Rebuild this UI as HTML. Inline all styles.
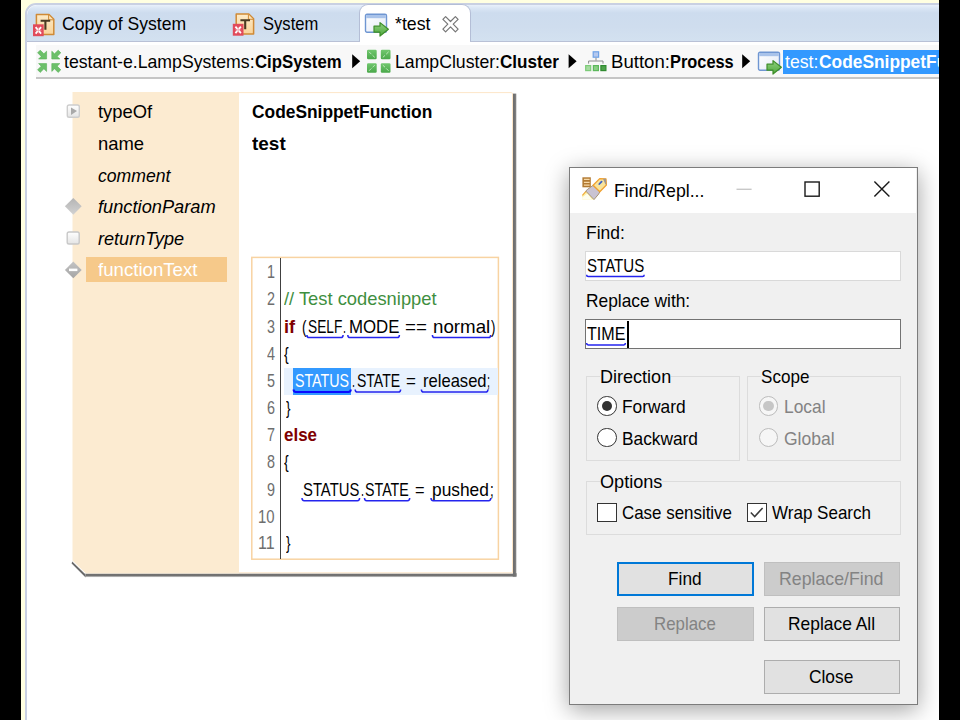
<!DOCTYPE html>
<html>
<head>
<meta charset="utf-8">
<title>Find/Replace</title>
<style>
html,body{margin:0;padding:0;}
body{width:960px;height:720px;overflow:hidden;background:#000;position:relative;font-family:"Liberation Sans",sans-serif;}
.a{position:absolute;}
.t{position:absolute;white-space:pre;line-height:1;transform-origin:0 50%;font-family:"Liberation Sans",sans-serif;}
#win{left:21px;top:0;width:918px;height:720px;background:#ffffe1;overflow:hidden;}
/* coordinates inside #win are page coords via inner wrapper shifted -21px */
#pg{left:-21px;top:0;width:960px;height:720px;}
#frame{left:24.5px;top:3.2px;width:940px;height:730px;background:#fff;border:2.6px solid #c9d0e2;border-radius:11px 0 0 0;box-sizing:border-box;}
#tabbar{left:27px;top:5.4px;width:920px;height:35.8px;background:linear-gradient(#e8f0fb 0,#d9e5f4 10%,#cddcee 22%,#cfddee 60%,#d3e1f0 100%);border-radius:10px 0 0 0;}
#tabline{left:27px;top:40.7px;width:920px;height:1.4px;background:#b9c1d6;}
#atab{left:359px;top:3.8px;width:112px;height:37.2px;background:#fff;border:1px solid #b4bed6;border-bottom:none;border-radius:9px 9px 0 0;box-sizing:border-box;}
#crumb{left:36px;top:45px;width:910px;height:32.5px;background:#f8f8f8;}
#crumbline{left:36px;top:77.2px;width:910px;height:1.7px;background:#c6c6c6;}
#crumbsel{left:783px;top:50px;width:160px;height:24px;background:#3399ff;}
/* property sheet */
#sheet{left:72px;top:92px;width:441px;height:482px;background:#fff;}
#beige{left:72px;top:92px;width:167px;height:482px;background:#fcebd1;}
#seltxt{left:86px;top:257px;width:141px;height:25px;background:#f6c98a;}
#editor{left:251px;top:256.8px;width:248px;height:303px;border:1.4px solid #f7d2a2;box-sizing:border-box;background:#fff;}
#gutter{left:280px;top:258px;width:1px;height:301px;background:#404040;}
#curline{left:284px;top:367.6px;width:213.5px;height:27px;background:#e8f2fe;}
#selword{left:293.2px;top:367.6px;width:57.7px;height:27px;background:#3399ff;}
/* dialog */
#dlg{left:568.8px;top:166.7px;width:349.2px;height:538px;background:#f0f0f0;border:1.6px solid #7c7c7c;box-sizing:border-box;box-shadow:0 5px 22px 0 rgba(0,0,0,.37);}
#dtitle{left:570.4px;top:168.3px;width:346px;height:45px;background:#fff;}
.inp{background:#fff;box-sizing:border-box;}
.grp{border:1px solid #dcdcdc;box-sizing:border-box;}
.btn{box-sizing:border-box;background:#e1e1e1;border:1px solid #adadad;}
.btn.dis{background:#cccccc;border-color:#bfbfbf;}
.btn.def{border:2px solid #0078d7;}
.radio{width:19.4px;height:19.4px;border-radius:50%;box-sizing:border-box;border:1.4px solid #333;background:#fff;}
.radio.dis{border-color:#bcbcbc;background:#f6f6f6;}
.cb{width:19.6px;height:19.6px;box-sizing:border-box;border:1.4px solid #333;background:#fff;}
</style>
</head>
<body>
<div id="win" class="a"><div id="pg" class="a">

<div id="frame" class="a"></div>
<div id="tabbar" class="a"></div>
<div id="tabline" class="a"></div>
<div id="atab" class="a"></div>
<div class="a" style="left:360px;top:40px;width:110px;height:3px;background:#fff"></div>
<div id="crumb" class="a"></div>
<div id="crumbline" class="a"></div>
<div id="crumbsel" class="a"></div>

<!-- property sheet -->
<svg class="a" style="left:60px;top:85px" width="470" height="505" viewBox="60 85 470 505">
  <defs>
    <linearGradient id="shb" x1="0" y1="0" x2="0" y2="1"><stop offset="0" stop-color="#6e6e6e"/><stop offset="0.62" stop-color="#747474"/><stop offset="1" stop-color="#9a9a9a" stop-opacity="0"/></linearGradient>
    <linearGradient id="shr" x1="0" y1="0" x2="1" y2="0"><stop offset="0" stop-color="#6e6e6e"/><stop offset="0.62" stop-color="#747474"/><stop offset="1" stop-color="#9a9a9a" stop-opacity="0"/></linearGradient>
  </defs>
  <!-- dark shadow borders -->
  <path d="M72.2 561.6 L85.6 574.6 V577.6 L71.6 563.4 Z" fill="#6a6a6a"/>
  <rect x="85.6" y="573.2" width="431" height="4.4" fill="url(#shb)"/>
  <rect x="512.8" y="93.6" width="4.2" height="483" fill="url(#shr)"/>
  <!-- body -->
  <path d="M72.5 92 H511 Q513 92 513 94 V573.4 H86 L72.5 560.6 Z" fill="#fff"/>
  <path d="M72.5 92 H239 V573.4 H86 L72.5 560.6 Z" fill="#fcebd1"/>
  <path d="M239 92.6 H511.4 Q512.5 92.6 512.5 94 V572.8 H239" stroke="#fde6c8" stroke-width="1" fill="none"/>
</svg>
<div id="seltxt" class="a"></div>
<svg class="a" style="left:245px;top:250px" width="260" height="316" viewBox="245 250 260 316"><rect x="251.8" y="257.4" width="246.6" height="301.8" fill="#fff" stroke="#f8d3a2" stroke-width="1.5"/></svg>
<div id="curline" class="a"></div>
<div id="selword" class="a"></div>
<div id="gutter" class="a"></div>

<!-- dialog -->
<div id="dlg" class="a"></div>
<div id="dtitle" class="a"></div>
<div class="a inp" style="left:585px;top:251px;width:316px;height:30px;border:1px solid #d9d9d9;"></div>
<div class="a inp" style="left:585px;top:319px;width:316px;height:30px;border:1.5px solid #727272;"></div>
<div class="a" style="left:626.5px;top:320.6px;width:2.6px;height:27.6px;background:#000"></div>
<div class="a grp" style="left:585.5px;top:375.5px;width:154px;height:85px;"></div>
<div class="a grp" style="left:747px;top:375.5px;width:154px;height:85px;"></div>
<div class="a grp" style="left:585.5px;top:481px;width:315.5px;height:53.5px;"></div>
<div class="a radio" style="left:597.4px;top:396.2px;"></div>
<div class="a" style="left:601.8px;top:400.6px;width:10.6px;height:10.6px;border-radius:50%;background:#333"></div>
<div class="a radio" style="left:597.4px;top:428.1px;"></div>
<div class="a radio dis" style="left:759px;top:396.2px;"></div>
<div class="a" style="left:763.4px;top:400.6px;width:10.6px;height:10.6px;border-radius:50%;background:#c6c6c6"></div>
<div class="a radio dis" style="left:759px;top:428.1px;"></div>
<div class="a cb" style="left:597.3px;top:502.6px;"></div>
<div class="a cb" style="left:747.1px;top:502.6px;"></div>
<svg class="a" style="left:747.3px;top:503px" width="19" height="19" viewBox="0 0 19 19"><path d="M3.8 9.6 L7.7 13.6 L15.6 4.9" stroke="#3a3a3a" stroke-width="1.5" fill="none"/></svg>
<div class="a btn def" style="left:616.5px;top:561.5px;width:137px;height:34px;"></div>
<div class="a btn dis" style="left:763.8px;top:561.5px;width:136px;height:34px;"></div>
<div class="a btn dis" style="left:616.5px;top:607px;width:137px;height:34px;"></div>
<div class="a btn" style="left:763.8px;top:607px;width:136px;height:34px;"></div>
<div class="a btn" style="left:763.8px;top:659.5px;width:136px;height:34px;"></div>

<svg class="a" style="left:0;top:0" width="960" height="720" viewBox="0 0 960 720">
<defs>
  <linearGradient id="gdoc" x1="0" y1="0" x2="0" y2="1"><stop offset="0" stop-color="#fdebc8"/><stop offset="1" stop-color="#f9d49a"/></linearGradient>
  <linearGradient id="gwin" x1="0" y1="0" x2="1" y2="1"><stop offset="0" stop-color="#ffffff"/><stop offset="1" stop-color="#e3eaf6"/></linearGradient>
  <linearGradient id="ggrn" x1="0" y1="0" x2="0" y2="1"><stop offset="0" stop-color="#8ed07e"/><stop offset="1" stop-color="#4fa83d"/></linearGradient>
  <linearGradient id="gsq" x1="0" y1="0" x2="0" y2="1"><stop offset="0" stop-color="#72c86f"/><stop offset="1" stop-color="#4aa84a"/></linearGradient>
  <linearGradient id="gbox" x1="0" y1="0" x2="0" y2="1"><stop offset="0" stop-color="#ffffff"/><stop offset="1" stop-color="#e4e4e4"/></linearGradient>
  <linearGradient id="gdia" x1="0" y1="0" x2="0" y2="1"><stop offset="0" stop-color="#b4b4b4"/><stop offset="1" stop-color="#d2d2d2"/></linearGradient>
  <linearGradient id="gdia2" x1="0" y1="0" x2="0" y2="1"><stop offset="0" stop-color="#c4c4c4"/><stop offset="1" stop-color="#a4a4a4"/></linearGradient>
  <!-- T document with red X ; origin at doc left/top (0,0) = (36,14) for first tab -->
  <!-- window with green arrow ; origin window top-left -->
</defs>

<!-- tab icons -->
<g transform="translate(33,14)">
    <path d="M3.4 0.6 H16 L20.8 5.4 V20.4 H3.4 Z" fill="url(#gdoc)" stroke="#d08a35" stroke-width="1.5" stroke-linejoin="round"/>
    <path d="M15.6 1 V5.8 H20.4" fill="#fbe3b8" stroke="#d08a35" stroke-width="1"/>
    <path d="M7.6 6.8 H17.2 M12.4 6.8 V15.8" stroke="#4a3a22" stroke-width="2.1" fill="none"/>
    <rect x="0" y="10.3" width="10.7" height="11.9" fill="#e14b5b"/>
    <path d="M2.6 13.2 L8.1 19.6 M8.1 13.2 L2.6 19.6" stroke="#fff" stroke-width="1.8"/>
    <path d="M5.35 13.4 V19.4 M2.2 16.4 H8.5" stroke="#ef98a2" stroke-width="0.7"/>
  </g>
<g transform="translate(232.8,13.5)">
    <path d="M3.4 0.6 H16 L20.8 5.4 V20.4 H3.4 Z" fill="url(#gdoc)" stroke="#d08a35" stroke-width="1.5" stroke-linejoin="round"/>
    <path d="M15.6 1 V5.8 H20.4" fill="#fbe3b8" stroke="#d08a35" stroke-width="1"/>
    <path d="M7.6 6.8 H17.2 M12.4 6.8 V15.8" stroke="#4a3a22" stroke-width="2.1" fill="none"/>
    <rect x="0" y="10.3" width="10.7" height="11.9" fill="#e14b5b"/>
    <path d="M2.6 13.2 L8.1 19.6 M8.1 13.2 L2.6 19.6" stroke="#fff" stroke-width="1.8"/>
    <path d="M5.35 13.4 V19.4 M2.2 16.4 H8.5" stroke="#ef98a2" stroke-width="0.7"/>
  </g>
<g transform="translate(364.8,13.6)">
    <rect x="0.7" y="0.7" width="21" height="18" rx="1.5" fill="url(#gwin)" stroke="#6f96d2" stroke-width="1.4"/>
    <rect x="1.4" y="1.4" width="19.6" height="3.2" fill="#a9c3ea"/>
    <path d="M9.2 12.6 H15.2 V9 L23.6 15.6 L15.2 22.4 V18.6 H9.2 Z" fill="url(#ggrn)" stroke="#3e8e2a" stroke-width="1.2" stroke-linejoin="round"/>
  </g>
<!-- tab close X -->
<path d="M445.6 16.6 L450.5 21.5 L455.4 16.6 L458.1 19.3 L453.2 24.2 L458.1 29.1 L455.4 31.8 L450.5 26.9 L445.6 31.8 L442.9 29.1 L447.8 24.2 L442.9 19.3 Z" fill="#fff" stroke="#767676" stroke-width="1.2" stroke-linejoin="round"/>

<!-- breadcrumb icon 1: 4 inward arrows -->
<g fill="#6cc06a" stroke="#58b058" stroke-width="0.6" stroke-linejoin="round">
  <path d="M46.6 59 H38.6 L41.2 56.4 L37.6 52.8 L40.2 50.2 L43.9 53.8 L46.6 51.2 Z"/>
  <path d="M51.8 59 H59.8 L57.2 56.4 L60.8 52.8 L58.2 50.2 L54.5 53.8 L51.8 51.2 Z"/>
  <path d="M46.6 63.6 H38.6 L41.2 66.2 L37.6 69.8 L40.2 72.4 L43.9 68.8 L46.6 71.4 Z"/>
  <path d="M51.8 63.6 H59.8 L57.2 66.2 L60.8 69.8 L58.2 72.4 L54.5 68.8 L51.8 71.4 Z"/>
</g>
<g transform="translate(352.2,54.2)"><path d="M0 0 L8 7 L0 14 Z" fill="#000"/></g>
<!-- breadcrumb icon 2: 4 squares -->
<g fill="url(#gsq)">
  <rect x="367" y="49.8" width="9.7" height="9.5" rx="1.2"/>
  <rect x="380.8" y="49.8" width="9.7" height="9.5" rx="1.2"/>
  <rect x="367" y="63.2" width="9.7" height="9.5" rx="1.2"/>
  <rect x="380.8" y="63.2" width="9.7" height="9.5" rx="1.2"/>
</g>
<g stroke="#c9ecc6" stroke-width="0.9" fill="none">
  <path d="M369 51.8 L371.4 54.2 M372.6 55.4 L374.8 57.4 M388.6 51.8 L386.2 54.2 M385 55.4 L382.8 57.4 M369 70.8 L371.4 68.4 M372.6 67.2 L374.8 65.2 M388.6 70.8 L386.2 68.4 M385 67.2 L382.8 65.2"/>
</g>
<g transform="translate(568.6,54.2)"><path d="M0 0 L8 7 L0 14 Z" fill="#000"/></g>
<!-- breadcrumb icon 3: hierarchy -->
<rect x="593.2" y="51.8" width="5.4" height="5.4" fill="#b4c8ee" stroke="#6fa2e6" stroke-width="1.2"/>
<path d="M596 57.8 V60.6 M588.6 63.6 V61 H603 V63.6" stroke="#8a8a8a" stroke-width="1" fill="none"/>
<rect x="585.7" y="65.6" width="5" height="5" fill="#a6dba0" stroke="#7ccb78" stroke-width="1.2"/>
<rect x="593.4" y="65.6" width="5" height="5" fill="#8acf84" stroke="#5cb85c" stroke-width="1.2"/>
<rect x="600.9" y="65.6" width="5" height="5" fill="#4ea24a" stroke="#2f8a2f" stroke-width="1.2"/>
<g transform="translate(742.2,54.2)"><path d="M0 0 L8 7 L0 14 Z" fill="#000"/></g>
<g transform="translate(757.8,51.6)">
    <rect x="0.7" y="0.7" width="21" height="18" rx="1.5" fill="url(#gwin)" stroke="#6f96d2" stroke-width="1.4"/>
    <rect x="1.4" y="1.4" width="19.6" height="3.2" fill="#a9c3ea"/>
    <path d="M9.2 12.6 H15.2 V9 L23.6 15.6 L15.2 22.4 V18.6 H9.2 Z" fill="url(#ggrn)" stroke="#3e8e2a" stroke-width="1.2" stroke-linejoin="round"/>
  </g>

<!-- property icons -->
<rect x="67.3" y="105" width="12" height="12.2" rx="1.8" fill="url(#gbox)" stroke="#cdcdcd" stroke-width="1.4"/>
<path d="M71 107.4 L77 111.1 L71 114.9 Z" fill="#a9a9a9"/>
<path d="M73.3 197.9 L81.7 206.3 L73.3 214.7 L64.9 206.3 Z" fill="url(#gdia)"/>
<rect x="67.2" y="232" width="12" height="12" rx="1.8" fill="url(#gbox)" stroke="#c8c8c8" stroke-width="1.4"/>
<path d="M73.3 261.5 L81.7 269.9 L73.3 278.3 L64.9 269.9 Z" fill="url(#gdia2)"/>
<rect x="69" y="268.6" width="8.4" height="2.5" fill="#fff"/>

<!-- dialog icon: flashlight + doc -->
<rect x="582.4" y="177.3" width="8.4" height="10" fill="#b27a32"/>
<path d="M583.9 179.3 H589.6 M583.9 182.3 H589.6 M583.9 185.2 H589.6" stroke="#f8d9a8" stroke-width="1.3"/>
<path d="M582.2 195.2 L586 191.2 L594 199.6 H582.2 Z" fill="#fff3a8"/>
<path d="M582.2 197.6 L587.4 193.4 L592 199.6 H582.2 Z" fill="#fffef0"/>
<path d="M582.4 195.4 L586 191.4" stroke="#f0a838" stroke-width="1.2"/>
<path d="M593.1 185.3 L599.8 191.8 L598.7 194 L594 199.6 L585.7 191 L587.8 189.2 Z" fill="#c9c3d2" stroke="#a08a64" stroke-width="0.9" stroke-linejoin="round"/>
<path d="M593.1 185.3 L599.7 178.6 L606 178.8 L606.4 185 L599.8 191.8 Z" fill="#f8e49c" stroke="#f0a030" stroke-width="1.3" stroke-linejoin="round"/>
<path d="M603 178.8 L606 178.8 L606.4 185 L605 183.4 Z" fill="#a09890"/>
<path d="M599.3 184 L601.6 181.6" stroke="#3b62c8" stroke-width="1.8" stroke-linecap="round"/>
<!-- title buttons -->
<path d="M736.5 189.3 H751.6" stroke="#c8c8c8" stroke-width="1.4"/>
<rect x="805" y="182" width="14.2" height="14.2" fill="none" stroke="#1a1a1a" stroke-width="1.4"/>
<path d="M874.4 181.6 L889.4 196.6 M889.4 181.6 L874.4 196.6" stroke="#1a1a1a" stroke-width="1.4"/>
<path d="M306.9 335.0 Q306.9 337.6 309.1 337.6 H340.9 Q343.1 337.6 343.1 335.0 M347.8 335.0 Q347.8 337.6 350.0 337.6 H397.2 Q399.4 337.6 399.4 335.0 M432.4 335.0 Q432.4 337.6 434.6 337.6 H488.5 Q490.7 337.6 490.7 335.0 M355.2 389.5 Q355.2 392.1 357.4 392.1 H398.4 Q400.6 392.1 400.6 389.5 M421.4 389.5 Q421.4 392.1 423.6 392.1 H485.7 Q487.9 392.1 487.9 389.5 M302.0 498.1 Q302.0 500.7 304.2 500.7 H357.4 Q359.6 500.7 359.6 498.1 M364.5 498.1 Q364.5 500.7 366.7 500.7 H407.5 Q409.7 500.7 409.7 498.1 M431.0 498.1 Q431.0 500.7 433.2 500.7 H488.6 Q490.8 500.7 490.8 498.1 M586.6 274.8 Q586.6 276.6 588.2 276.6 H642.6 Q644.2 276.6 644.2 274.8 M586.6 343.1 Q586.6 344.9 588.2 344.9 H623.8 Q625.4 344.9 625.4 343.1" fill="none" stroke="#2424ee" stroke-width="1.5"/><path d="M293.6 389.6 Q293.6 392 295.8 392 H348.6 Q350.8 392 350.8 389.6" fill="none" stroke="#0a0aff" stroke-width="2"/>
</svg>


<span class="t" style="left:61.8px;top:15.9px;font-size:17.8px;color:#000;transform:scaleX(0.9895);">Copy of System</span>
<span class="t" style="left:262.7px;top:15.9px;font-size:17.8px;color:#000;transform:scaleX(0.9326);">System</span>
<span class="t" style="left:394.8px;top:15.9px;font-size:17.8px;color:#000;transform:scaleX(0.9974);">*test</span>
<span class="t" style="left:64.4px;top:53.9px;font-size:17.8px;color:#000;transform:scaleX(0.9941);">testant-e.LampSystems:</span>
<span class="t" style="left:255.0px;top:53.9px;font-size:17.8px;color:#000;transform:scaleX(0.9434);font-weight:bold;">CipSystem</span>
<span class="t" style="left:395.0px;top:53.9px;font-size:17.8px;color:#000;transform:scaleX(0.9929);">LampCluster:</span>
<span class="t" style="left:500.0px;top:53.9px;font-size:17.8px;color:#000;transform:scaleX(0.9630);font-weight:bold;">Cluster</span>
<span class="t" style="left:610.9px;top:53.9px;font-size:17.8px;color:#000;transform:scaleX(1.0451);">Button:</span>
<span class="t" style="left:669.8px;top:53.9px;font-size:17.8px;color:#000;transform:scaleX(0.9205);font-weight:bold;">Process</span>
<span class="t" style="left:785.2px;top:53.9px;font-size:17.8px;color:#fff;transform:scaleX(0.9908);">test:</span>
<span class="t" style="left:818.5px;top:53.9px;font-size:17.8px;color:#fff;transform:scaleX(0.9761);font-weight:bold;">CodeSnippetFunction</span>
<span class="t" style="left:97.8px;top:103.9px;font-size:17.8px;color:#000;transform:scaleX(1.0345);">typeOf</span>
<span class="t" style="left:97.6px;top:136.4px;font-size:17.8px;color:#000;transform:scaleX(1.0363);">name</span>
<span class="t" style="left:97.8px;top:168.0px;font-size:17.8px;color:#000;transform:scaleX(0.9915);font-style:italic;">comment</span>
<span class="t" style="left:97.8px;top:199.4px;font-size:17.8px;color:#000;transform:scaleX(1.0265);font-style:italic;">functionParam</span>
<span class="t" style="left:97.8px;top:231.4px;font-size:17.8px;color:#000;transform:scaleX(1.0180);font-style:italic;">returnType</span>
<span class="t" style="left:97.8px;top:262.4px;font-size:17.8px;color:#fff;transform:scaleX(1.0475);">functionText</span>
<span class="t" style="left:252.3px;top:104.3px;font-size:17.8px;color:#000;transform:scaleX(0.9761);font-weight:bold;">CodeSnippetFunction</span>
<span class="t" style="left:252.3px;top:136.2px;font-size:17.8px;color:#000;transform:scaleX(1.0656);font-weight:bold;">test</span>
<span class="t" style="left:267.2px;top:264.4px;font-size:17.8px;color:#6e6e6e;transform:scaleX(0.8088);">1</span>
<span class="t" style="left:267.2px;top:291.4px;font-size:17.8px;color:#6e6e6e;transform:scaleX(0.8088);">2</span>
<span class="t" style="left:267.2px;top:318.8px;font-size:17.8px;color:#6e6e6e;transform:scaleX(0.8088);">3</span>
<span class="t" style="left:267.2px;top:345.9px;font-size:17.8px;color:#6e6e6e;transform:scaleX(0.8088);">4</span>
<span class="t" style="left:267.2px;top:373.1px;font-size:17.8px;color:#6e6e6e;transform:scaleX(0.8088);">5</span>
<span class="t" style="left:267.2px;top:400.1px;font-size:17.8px;color:#6e6e6e;transform:scaleX(0.8088);">6</span>
<span class="t" style="left:267.2px;top:427.4px;font-size:17.8px;color:#6e6e6e;transform:scaleX(0.8088);">7</span>
<span class="t" style="left:267.2px;top:454.4px;font-size:17.8px;color:#6e6e6e;transform:scaleX(0.8088);">8</span>
<span class="t" style="left:267.2px;top:481.9px;font-size:17.8px;color:#6e6e6e;transform:scaleX(0.8088);">9</span>
<span class="t" style="left:258.0px;top:509.0px;font-size:17.8px;color:#6e6e6e;transform:scaleX(0.8392);">10</span>
<span class="t" style="left:258.0px;top:535.4px;font-size:17.8px;color:#6e6e6e;transform:scaleX(0.8988);">11</span>
<span class="t" style="left:284.3px;top:291.4px;font-size:17.8px;color:#3f8f3f;transform:scaleX(1.0314);">// Test codesnippet</span>
<span class="t" style="left:284.3px;top:318.8px;font-size:17.8px;color:#7f0000;transform:scaleX(1.0207);font-weight:bold;">if</span>
<span class="t" style="left:302.0px;top:318.8px;font-size:17.8px;color:#000;transform:scaleX(0.7599);">(</span>
<span class="t" style="left:307.7px;top:318.8px;font-size:17.8px;color:#000;transform:scaleX(0.7711);">SELF</span>
<span class="t" style="left:343.0px;top:318.8px;font-size:17.8px;color:#000;transform:scaleX(0.6057);">.</span>
<span class="t" style="left:348.5px;top:318.8px;font-size:17.8px;color:#000;transform:scaleX(0.9467);">MODE</span>
<span class="t" style="left:404.8px;top:318.8px;font-size:17.8px;color:#000;transform:scaleX(1.0538);">==</span>
<span class="t" style="left:433.0px;top:318.8px;font-size:17.8px;color:#000;transform:scaleX(1.0523);">normal</span>
<span class="t" style="left:490.8px;top:318.8px;font-size:17.8px;color:#000;transform:scaleX(0.7430);">)</span>
<span class="t" style="left:284.3px;top:345.9px;font-size:17.8px;color:#000;transform:scaleX(0.7895);">{</span>
<span class="t" style="left:295.4px;top:373.1px;font-size:17.8px;color:#fff;transform:scaleX(0.7998);">STATUS</span>
<span class="t" style="left:351.5px;top:373.1px;font-size:17.8px;color:#000;transform:scaleX(0.6057);">.</span>
<span class="t" style="left:356.7px;top:373.1px;font-size:17.8px;color:#000;transform:scaleX(0.7883);">STATE</span>
<span class="t" style="left:406.0px;top:373.1px;font-size:17.8px;color:#000;transform:scaleX(0.9528);">=</span>
<span class="t" style="left:422.9px;top:373.1px;font-size:17.8px;color:#000;transform:scaleX(0.9323);">released</span>
<span class="t" style="left:487.0px;top:373.1px;font-size:17.8px;color:#000;transform:scaleX(0.6057);">;</span>
<span class="t" style="left:286.0px;top:400.1px;font-size:17.8px;color:#000;transform:scaleX(0.7559);">}</span>
<span class="t" style="left:284.3px;top:427.4px;font-size:17.8px;color:#7f0000;transform:scaleX(0.9535);font-weight:bold;">else</span>
<span class="t" style="left:284.3px;top:454.4px;font-size:17.8px;color:#000;transform:scaleX(0.7895);">{</span>
<span class="t" style="left:302.7px;top:481.9px;font-size:17.8px;color:#000;transform:scaleX(0.8339);">STATUS</span>
<span class="t" style="left:360.5px;top:481.9px;font-size:17.8px;color:#000;transform:scaleX(0.6057);">.</span>
<span class="t" style="left:365.4px;top:481.9px;font-size:17.8px;color:#000;transform:scaleX(0.8011);">STATE</span>
<span class="t" style="left:415.0px;top:481.9px;font-size:17.8px;color:#000;transform:scaleX(0.9239);">=</span>
<span class="t" style="left:431.6px;top:481.9px;font-size:17.8px;color:#000;transform:scaleX(0.9753);">pushed</span>
<span class="t" style="left:490.0px;top:481.9px;font-size:17.8px;color:#000;transform:scaleX(0.7470);">;</span>
<span class="t" style="left:286.0px;top:535.4px;font-size:17.8px;color:#000;transform:scaleX(0.7559);">}</span>
<span class="t" style="left:614.2px;top:182.8px;font-size:17.8px;color:#000;transform:scaleX(0.9943);">Find/Repl...</span>
<span class="t" style="left:585.8px;top:224.9px;font-size:17.8px;color:#000;transform:scaleX(0.9815);">Find:</span>
<span class="t" style="left:587.0px;top:258.2px;font-size:17.8px;color:#000;transform:scaleX(0.8472);">STATUS</span>
<span class="t" style="left:585.8px;top:293.2px;font-size:17.8px;color:#000;transform:scaleX(0.9761);">Replace with:</span>
<span class="t" style="left:587.0px;top:325.7px;font-size:17.8px;color:#000;transform:scaleX(0.9039);">TIME</span>
<span class="t" style="left:599.6px;top:368.8px;font-size:17.8px;color:#000;transform:scaleX(1.0147);background:#f0f0f0;">Direction</span>
<span class="t" style="left:761.0px;top:368.8px;font-size:17.8px;color:#000;transform:scaleX(0.9599);background:#f0f0f0;">Scope</span>
<span class="t" style="left:622.2px;top:398.9px;font-size:17.8px;color:#000;transform:scaleX(0.9767);">Forward</span>
<span class="t" style="left:622.2px;top:430.6px;font-size:17.8px;color:#000;transform:scaleX(0.9734);">Backward</span>
<span class="t" style="left:783.7px;top:398.9px;font-size:17.8px;color:#838383;transform:scaleX(0.9761);">Local</span>
<span class="t" style="left:783.7px;top:430.6px;font-size:17.8px;color:#838383;transform:scaleX(0.9843);">Global</span>
<span class="t" style="left:599.6px;top:474.1px;font-size:17.8px;color:#000;transform:scaleX(1.0183);background:#f0f0f0;">Options</span>
<span class="t" style="left:622.2px;top:504.9px;font-size:17.8px;color:#000;transform:scaleX(0.9512);">Case sensitive</span>
<span class="t" style="left:771.8px;top:504.9px;font-size:17.8px;color:#000;transform:scaleX(0.9570);">Wrap Search</span>
<span class="t" style="left:667.7px;top:570.8px;font-size:17.8px;color:#000;transform:scaleX(0.9713);">Find</span>
<span class="t" style="left:778.9px;top:570.8px;font-size:17.8px;color:#838383;transform:scaleX(0.9973);">Replace/Find</span>
<span class="t" style="left:653.8px;top:616.4px;font-size:17.8px;color:#838383;transform:scaleX(0.9471);">Replace</span>
<span class="t" style="left:788.4px;top:616.4px;font-size:17.8px;color:#000;transform:scaleX(0.9790);">Replace All</span>
<span class="t" style="left:809.4px;top:668.9px;font-size:17.8px;color:#000;transform:scaleX(0.9743);">Close</span>

</div></div>
</body>
</html>
